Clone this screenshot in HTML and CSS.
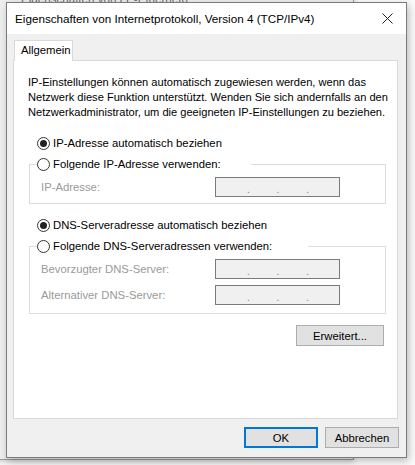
FILE: index.html
```html
<!DOCTYPE html>
<html lang="de">
<head>
<meta charset="utf-8">
<title>Eigenschaften von Internetprotokoll, Version 4 (TCP/IPv4)</title>
<link rel="stylesheet" href="styles.css">
</head>
<body>
<div class="backwin">
  <div class="backwin-title">Eigenschaften von LP-Ethernet0</div>
</div>
<div class="dialog">
  <div class="titlebar">
    <span class="title">Eigenschaften von Internetprotokoll, Version 4 (TCP/IPv4)</span>
    <svg class="close" width="11" height="11" viewBox="0 0 11 11"><path d="M0.5 0.5 L10.5 10.5 M10.5 0.5 L0.5 10.5" stroke="#222" stroke-width="1" fill="none"/></svg>
  </div>
  <div class="body">
    <div class="tabs"><div class="tab">Allgemein</div></div>
    <div class="panel">
      <p class="intro">IP-Einstellungen können automatisch zugewiesen werden, wenn das<br>Netzwerk diese Funktion unterstützt. Wenden Sie sich andernfalls an den<br>Netzwerkadministrator, um die geeigneten IP-Einstellungen zu beziehen.</p>

      <div class="radio-row ip-auto"><span class="radio checked"></span><span>IP-Adresse automatisch beziehen</span></div>
      <fieldset class="group">
        <legend class="radio-row legend-ip"><span class="radio"></span><span>Folgende IP-Adresse verwenden:</span></legend>
        <div class="field"><span class="field-label">IP-Adresse:</span><span class="ipbox"><i>.</i><i>.</i><i>.</i></span></div>
      </fieldset>

      <div class="radio-row dns-auto"><span class="radio checked"></span><span>DNS-Serveradresse automatisch beziehen</span></div>
      <fieldset class="group group-dns">
        <legend class="radio-row legend-dns"><span class="radio"></span><span>Folgende DNS-Serveradressen verwenden:</span></legend>
        <div class="field"><span class="field-label">Bevorzugter DNS-Server:</span><span class="ipbox"><i>.</i><i>.</i><i>.</i></span></div>
        <div class="field"><span class="field-label">Alternativer DNS-Server:</span><span class="ipbox"><i>.</i><i>.</i><i>.</i></span></div>
      </fieldset>

      <div class="adv-row"><button class="btn adv">Erweitert...</button></div>
    </div>
    <div class="footer">
      <button class="btn default">OK</button>
      <button class="btn">Abbrechen</button>
    </div>
  </div>
</div>
</body>
</html>
```

FILE: styles.css
```css
html, body {
  margin: 0;
  padding: 0;
}
body {
  width: 415px;
  height: 465px;
  background: #fbfbfb;
  font-family: "Liberation Sans", Arial, sans-serif;
  font-size: 11.3px;
  color: #000;
  position: relative;
  overflow: hidden;
}

/* window behind the dialog */
.backwin {
  position: absolute;
  left: -10px;
  top: -20px;
  width: 362px;
  height: 478px;
  background: #eeeeee;
  border: 1px solid #9a9a9a;
  box-shadow: 0 2px 6px rgba(0,0,0,0.18);
}
.backwin-title {
  position: absolute;
  left: 30px;
  top: 11px;
  color: #6a6a6a;
  font-size: 11.6px;
}

/* the dialog window */
.dialog {
  position: absolute;
  left: 6px;
  top: 2px;
  width: 399px;
  height: 454px;
  border: 1px solid #7a7a7a;
  background: #f0f0f0;
  box-shadow: 2px 3px 8px rgba(0,0,0,0.25);
  display: flex;
  flex-direction: column;
}
.titlebar {
  height: 31px;
  background: #fff;
  display: flex;
  align-items: center;
  justify-content: space-between;
  padding: 0 13px 0 8px;
  flex: none;
}
.title {
  font-size: 11.7px;
  color: #000;
}
.close {
  display: block;
}

.body {
  flex: 1;
  display: flex;
  flex-direction: column;
  padding: 6px 8px 0 6px;
}
.tabs {
  display: flex;
  height: 20px;
  padding-left: 1px;
  flex: none;
}
.tab {
  width: 59px;
  height: 21px;
  box-sizing: border-box;
  background: #fff;
  border: 1px solid #d9d9d9;
  border-bottom: none;
  padding: 3px 0 0 6px;
  position: relative;
  z-index: 1;
  margin-bottom: -1px;
}
.panel {
  box-sizing: border-box;
  height: 359px;
  flex: none;
  background: #fff;
  border: 1px solid #d9d9d9;
  padding: 14px 11px 0 14px;
  display: flex;
  flex-direction: column;
}
.intro {
  margin: 0;
  line-height: 15px;
  font-size: 11.1px;
  white-space: nowrap;
}

.radio-row {
  display: flex;
  align-items: center;
  height: 16px;
  gap: 3px;
}
.ip-auto {
  margin-top: 15px;
  margin-left: 9px;
}
.radio {
  width: 13px;
  height: 13px;
  box-sizing: border-box;
  border: 1px solid #333;
  border-radius: 50%;
  background: #fff;
  display: flex;
  align-items: center;
  justify-content: center;
  flex: none;
}
.radio.checked::after {
  content: "";
  width: 7px;
  height: 7px;
  border-radius: 50%;
  background: #222;
}

.group {
  margin: 5px 0 0 1px;
  padding: 5px 0 6px 11px;
  border: 1px solid #dcdcdc;
  min-width: 0;
}
.group-dns {
  padding-bottom: 8px;
}
.group legend {
  margin-left: -4px;
}
.legend-ip {
  padding: 0 30px 0 0;
}
.legend-dns {
  padding: 0 36px 0 0;
}
.field {
  display: flex;
  align-items: center;
  height: 20px;
  color: #9a9a9a;
}
.field + .field {
  margin-top: 6px;
}
.field-label {
  width: 174px;
}
.ipbox {
  width: 125px;
  height: 20px;
  box-sizing: border-box;
  background: #f0f0f0;
  border: 1px solid #7a7a7a;
  display: flex;
  justify-content: space-between;
  padding: 0 30px 0 31px;
  align-items: center;
}
.ipbox i {
  font-style: normal;
  color: #808080;
  font-size: 10px;
  line-height: 1;
  margin-top: 5px;
}
.dns-auto {
  margin-top: 13px;
  margin-left: 9px;
}

.adv-row {
  display: flex;
  justify-content: flex-end;
  margin-top: 11px;
  padding-right: 2px;
}
.btn {
  font-family: inherit;
  font-size: 11.3px;
  color: #000;
  background: #e1e1e1;
  border: 1px solid #adadad;
  height: 21px;
  padding: 0;
  margin: 0;
}
.adv {
  width: 88px;
}
.footer {
  display: flex;
  justify-content: flex-end;
  gap: 7px;
  margin-top: 8px;
  margin-right: -1px;
}
.footer .btn {
  width: 74px;
}
.btn.default {
  border: 2px solid #0078d7;
}
```
